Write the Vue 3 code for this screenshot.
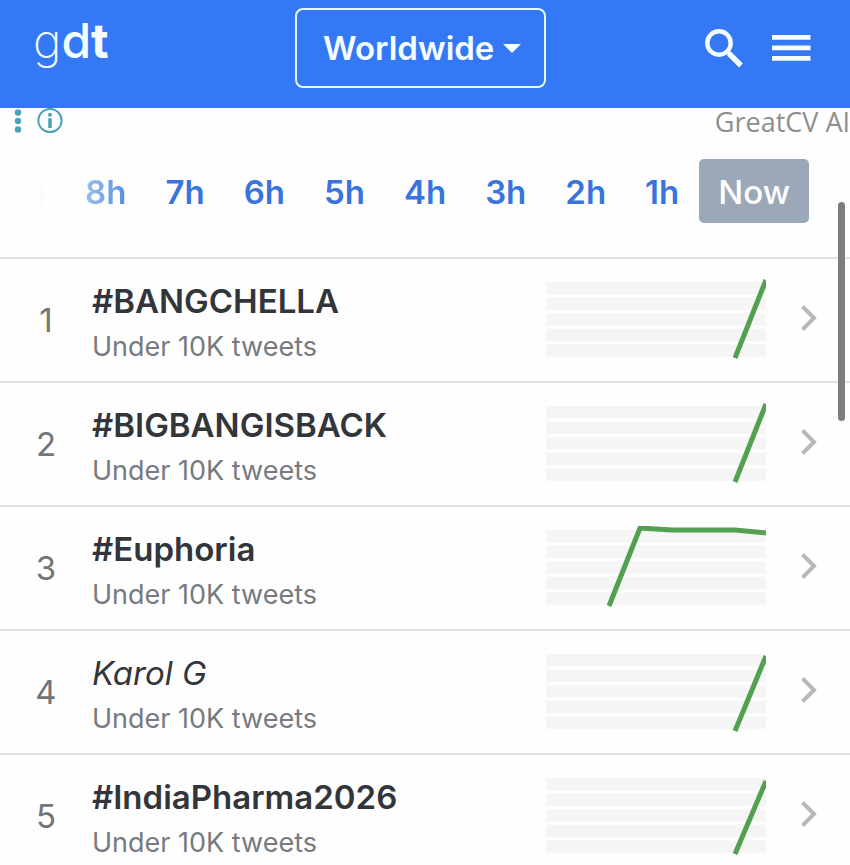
<script setup>
import { ref } from 'vue'

const place = ref('Worldwide')
const hours = [9, 8, 7, 6, 5, 4, 3, 2, 1]
const bars = [0, 1, 2, 3, 4]
const trends = [
  { name: '#BANGCHELLA', hashtag: true, points: '189,80 220,2' },
  { name: '#BIGBANGISBACK', hashtag: true, points: '189,80 220,2' },
  { name: '#Euphoria', hashtag: true, points: '63,80 94,2 126,4 189,4 220,7' },
  { name: 'Karol G', hashtag: false, points: '189,81 220,6' },
  { name: '#IndiaPharma2026', hashtag: true, points: '189,80 220,7' },
]
</script>

<template>
  <div class="page">
    <header class="topbar">
      <a class="logo" href="#" aria-label="gdt"><span class="thin">g</span><span class="medium">d</span><span class="heavy">t</span></a>
      <div class="place">
        <select v-model="place" aria-label="Location">
          <option>Worldwide</option>
        </select>
        <svg class="caret" viewBox="0 0 18 10" aria-hidden="true"><path d="M0 0H18L9 9Z" /></svg>
      </div>
      <div class="tools">
        <button type="button" aria-label="Search">
          <svg width="40" height="40" viewBox="0 0 40 40" fill="none" stroke="currentColor">
            <circle cx="16" cy="15" r="11.700" stroke-width="4.400" />
            <path d="M26 25.500L38 37.500" stroke-width="5.400" />
            <path d="M24 23L27 26" stroke-width="4" />
          </svg>
        </button>
        <button type="button" aria-label="Menu">
          <svg width="40" height="40" viewBox="0 0 40 40" fill="currentColor">
            <path d="M1 7H39.500V11.800H1ZM1 17.500H39.500V22.300H1ZM1 28H39.500V32.800H1Z" />
          </svg>
        </button>
      </div>
    </header>

    <aside class="ad">
      <div class="ad-controls">
        <button type="button" aria-label="Ad options">
          <svg width="8" height="24" viewBox="0 0 8 24" fill="currentColor">
            <circle cx="4" cy="3.500" r="3.200" /><circle cx="4" cy="12" r="3.200" /><circle cx="4" cy="20.500" r="3.200" />
          </svg>
        </button>
        <button type="button" aria-label="About this ad">
          <svg width="26" height="26" viewBox="0 0 26 26" fill="currentColor">
            <circle cx="13" cy="12.500" r="11.600" fill="none" stroke="currentColor" stroke-width="2" />
            <circle cx="13" cy="6.800" r="2" />
            <rect x="11.200" y="10.200" width="3.600" height="9.800" rx="0.600" />
          </svg>
        </button>
      </div>
      <a class="advertiser" href="#">GreatCV AI</a>
    </aside>

    <nav class="timeline" aria-label="Time">
      <a v-for="h in hours" :key="h" href="#">{{ h }}h</a>
      <a class="current" href="#" aria-current="true">Now</a>
    </nav>

    <ol class="trends">
      <li v-for="(t, i) in trends" :key="t.name">
        <a class="trend" href="#">
          <span class="rank">{{ i + 1 }}</span>
          <span class="text">
            <span class="name" :class="{ plain: !t.hashtag }">{{ t.name }}</span>
            <span class="count">Under 10K tweets</span>
          </span>
          <svg class="spark" viewBox="0 0 220 84" aria-hidden="true">
            <rect v-for="b in bars" :key="b" x="0" :y="4 + b * 15.6" width="220" height="12.4" fill="#f5f5f5" />
            <polyline :points="t.points" fill="none" stroke="#53a053" stroke-width="5" />
          </svg>
          <svg class="chevron" viewBox="0 0 16 26" aria-hidden="true">
            <path d="M1.500 1.500L13 13L1.500 24.500" fill="none" stroke="#b8b8b8" stroke-width="4" />
          </svg>
        </a>
      </li>
    </ol>
    <div class="scroll-thumb"></div>
  </div>
</template>

<style>
body {
  background: #fefefe;
}
</style>

<style scoped>
.page {
  position: relative;
  height: 100vh;
  overflow: hidden;
  font-family: Inter, "Liberation Sans", sans-serif;
  font-size: 33px;
  color: #32353a;
}
a {
  color: inherit;
  text-decoration: none;
}
button {
  display: block;
  padding: 0;
  border: 0;
  background: none;
  color: inherit;
}
svg {
  display: block;
}
.topbar {
  display: grid;
  grid-template-columns: 1fr auto 1fr;
  align-items: center;
  box-sizing: border-box;
  height: 108px;
  padding: 0 39px 12px 30px;
  background: #3478f6;
  color: #f4fdff;
}
.logo {
  padding: 0 0 14px 3px;
  font-size: 48px;
  line-height: 60px;
}
.thin {
  font-weight: 200;
}
.medium {
  font-weight: 500;
}
.heavy {
  font-weight: 700;
}
.place {
  position: relative;
}
.place select {
  display: block;
  box-sizing: border-box;
  width: 251px;
  height: 80px;
  padding: 0 48px 0 26px;
  border: 2px solid #e6f8ff;
  border-radius: 8px;
  appearance: none;
  background: transparent;
  color: inherit;
  font: inherit;
  font-weight: 600;
}
.caret {
  position: absolute;
  top: 36px;
  right: 25px;
  width: 18px;
  fill: currentColor;
  pointer-events: none;
}
.tools {
  display: flex;
  justify-content: flex-end;
  gap: 28px;
}
.ad {
  display: flex;
  justify-content: space-between;
  height: 51px;
  color: #4ba3b5;
}
.ad-controls {
  display: flex;
  align-items: center;
  gap: 15px;
  height: 26px;
  padding-left: 14px;
}
.advertiser {
  color: #8e8e8e;
  font-family: "Open Sans", "Noto Sans", sans-serif;
  font-size: 27px;
  line-height: 28px;
}
.timeline {
  display: flex;
  justify-content: flex-end;
  gap: 1px;
  height: 98px;
  padding-right: 41px;
  border-bottom: 2px solid #e1e2e4;
  color: #3974dd;
  font-weight: 600;
  line-height: 66px;
}
.timeline a {
  padding: 0 19px;
}
.timeline a:nth-child(1) {
  background: linear-gradient(90deg, transparent 60%, #f3f8fe 80%);
  background-clip: text;
  color: transparent;
}
.timeline a:nth-child(2) {
  background: linear-gradient(90deg, #a0c2ec 20%, #528bdf 80%);
  background-clip: text;
  color: transparent;
}
.timeline .current {
  height: 64px;
  border-radius: 5px;
  background: #9ba8b7;
  color: #fff;
  font-weight: 500;
}
.trends {
  margin: 0;
  padding: 0;
  list-style: none;
}
.trend {
  display: flex;
  align-items: center;
  height: 122px;
  padding-right: 33px;
  border-bottom: 2px solid #dfe1e3;
}
.rank {
  width: 92px;
  flex: none;
  text-align: center;
  color: #737679;
}
.text {
  display: flex;
  flex: 1;
  flex-direction: column;
  gap: 6px;
  padding-top: 4px;
}
.name {
  font-weight: 600;
  line-height: 44px;
}
.name.plain {
  font-style: italic;
  font-weight: 400;
}
.count {
  color: #777a7f;
  font-size: 27px;
  line-height: 36px;
}
.spark {
  width: 220px;
  flex: none;
}
.chevron {
  width: 16px;
  flex: none;
  margin: 0 0 5px 35px;
}
.scroll-thumb {
  position: absolute;
  top: 202px;
  right: 5px;
  width: 7px;
  height: 219px;
  border-radius: 4px;
  background: #7d7d7d;
}
</style>
